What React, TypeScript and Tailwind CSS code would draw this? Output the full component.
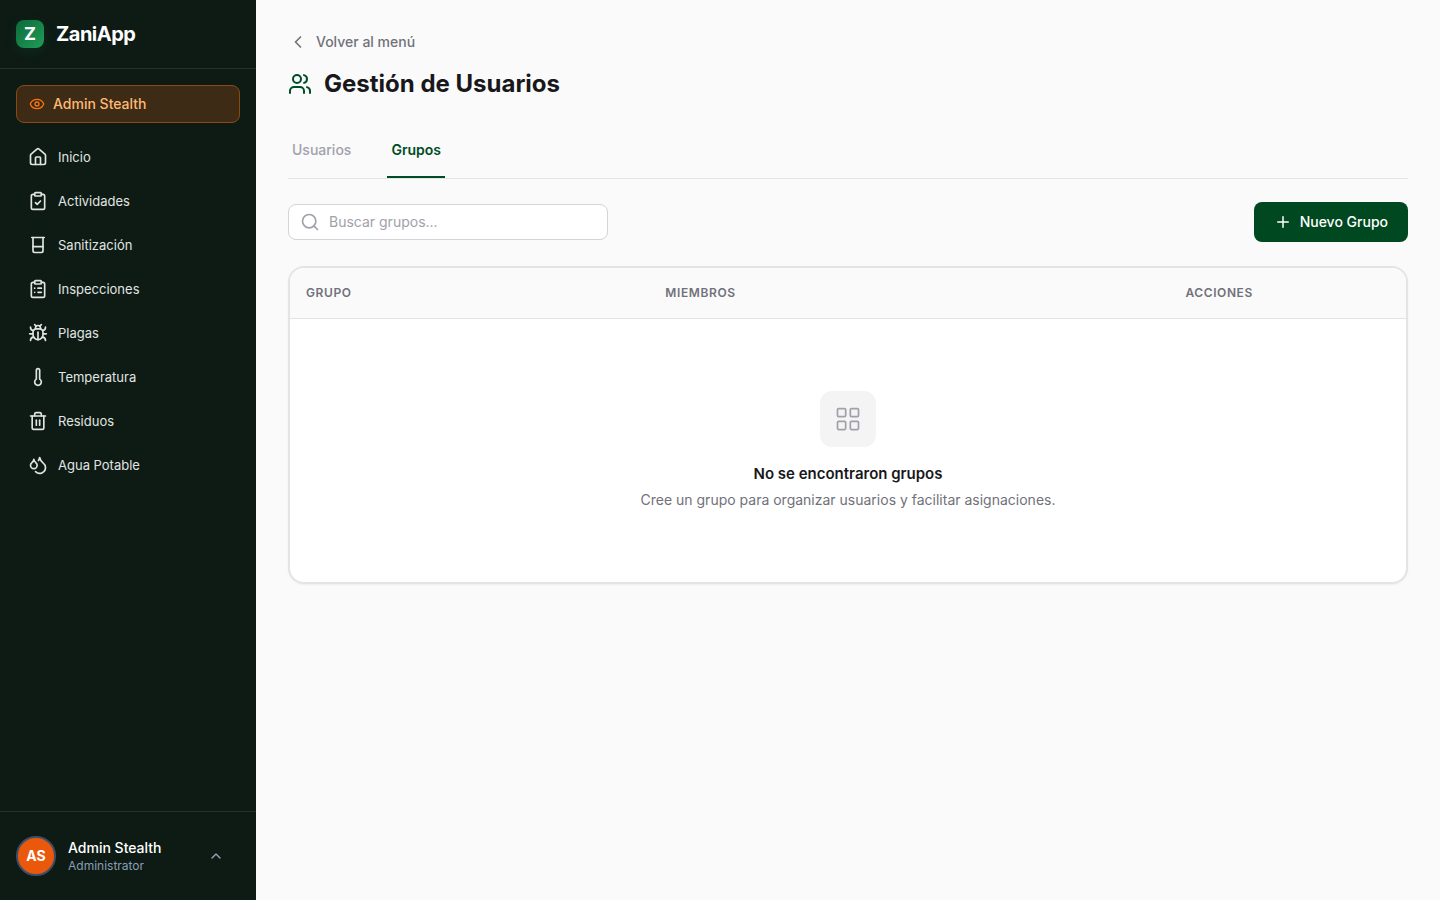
import React from "react";
import {
  Beaker,
  Bug,
  ChevronLeft,
  ChevronUp,
  ClipboardCheck,
  ClipboardList,
  Droplets,
  Eye,
  House,
  LayoutGrid,
  Plus,
  Search,
  Thermometer,
  Trash2,
  Users,
  type LucideIcon,
} from "lucide-react";

const navItems: { label: string; icon: LucideIcon }[] = [
  { label: "Inicio", icon: House },
  { label: "Actividades", icon: ClipboardCheck },
  { label: "Sanitización", icon: Beaker },
  { label: "Inspecciones", icon: ClipboardList },
  { label: "Plagas", icon: Bug },
  { label: "Temperatura", icon: Thermometer },
  { label: "Residuos", icon: Trash2 },
  { label: "Agua Potable", icon: Droplets },
];

function Sidebar() {
  return (
    <aside className="sticky top-0 flex h-screen w-64 shrink-0 flex-col bg-[#0d1b14] text-white">
      <div className="flex items-center gap-3 border-b border-white/10 px-4 py-5">
        <span className="flex size-7 items-center justify-center rounded-lg bg-linear-to-br from-[#0d6b3a] to-[#1f9d57] text-lg font-bold shadow-[0_4px_12px_rgba(22,128,70,0.15)]">
          Z
        </span>
        <span className="text-xl font-bold leading-7 tracking-tight">ZaniApp</span>
      </div>

      <div className="flex flex-1 flex-col gap-3.5 overflow-y-auto p-4">
        <button
          type="button"
          className="flex items-center gap-2 rounded-lg border border-[#8f4716] bg-[#3d2b16] px-3 py-2 text-sm font-medium text-[#fdba74]"
        >
          <Eye className="size-4 text-[#f97316]" />
          Admin Stealth
        </button>
        <nav>
          <ul className="flex flex-col gap-1">
            {navItems.map(({ label, icon: Icon }) => (
              <li key={label}>
                <a href="#" className="flex h-10 items-center gap-2.5 rounded-lg px-3 text-[13px] leading-5 text-[#e0e4e2]">
                  <Icon className="size-5" />
                  {label}
                </a>
              </li>
            ))}
          </ul>
        </nav>
      </div>

      <div className="border-t border-white/10 py-6 pl-4 pr-8">
        <button type="button" className="flex w-full items-center gap-3 text-left">
          <span className="flex size-10 items-center justify-center rounded-full border-2 border-[#3f4f68] bg-[#ea580c] text-sm font-bold">
            AS
          </span>
          <span className="flex flex-1 flex-col">
            <span className="text-sm font-medium leading-5">Admin Stealth</span>
            <span className="text-xs leading-4 text-[#8b9bb8]">Administrator</span>
          </span>
          <ChevronUp className="size-4 text-[#94a3b8]" />
        </button>
      </div>
    </aside>
  );
}

function GroupsTable() {
  return (
    <div className="overflow-hidden rounded-2xl border-2 border-[#e4e4e7] bg-white shadow-xs">
      <table className="w-full table-fixed text-left">
        <thead className="bg-[#fafafa] text-xs font-semibold uppercase tracking-wider text-[#71717a]">
          <tr className="h-[50px] border-b border-[#e4e4e7]">
            <th scope="col" className="w-[32.2%] px-4 font-semibold">Grupo</th>
            <th scope="col" className="px-4 font-semibold">Miembros</th>
            <th scope="col" className="w-[21.2%] px-4 font-semibold">Acciones</th>
          </tr>
        </thead>
        <tbody>
          <tr>
            <td colSpan={3} className="px-6 py-18">
              <div className="flex flex-col items-center">
                <span className="flex size-14 items-center justify-center rounded-xl bg-[#f4f4f5] text-[#a1a1aa]">
                  <LayoutGrid className="size-7" strokeWidth={1.5} />
                </span>
                <h2 className="mt-4 text-[15px] font-semibold leading-[21px] text-[#18181b]">No se encontraron grupos</h2>
                <p className="mt-1.5 text-sm leading-5 text-[#71717a]">
                  Cree un grupo para organizar usuarios y facilitar asignaciones.
                </p>
              </div>
            </td>
          </tr>
        </tbody>
      </table>
    </div>
  );
}

export default function App() {
  return (
    <div className="flex min-h-screen bg-[#fafafa] font-['Inter',sans-serif] text-[#18181b]">
      <Sidebar />
      <main className="min-w-0 flex-1 p-8">
        <a href="#" className="inline-flex h-5 items-center gap-2 text-sm font-medium text-[#71717a]">
          <ChevronLeft className="size-5" />
          Volver al menú
        </a>
        <h1 className="mt-2.5 flex items-center gap-3 text-2xl font-bold leading-8">
          <Users className="size-6 text-[#004d25]" />
          Gestión de Usuarios
        </h1>

        <div role="tablist" className="mt-8 flex gap-8 border-b border-[#e4e4e7]">
          <button type="button" role="tab" aria-selected={false} className="border-b-2 border-transparent px-1 pt-2 pb-4 text-sm font-medium text-[#a1a1aa]">
            Usuarios
          </button>
          <button type="button" role="tab" aria-selected className="border-b-2 border-[#004d25] px-1 pt-2 pb-4 text-sm font-semibold text-[#004d25]">
            Grupos
          </button>
        </div>

        <div className="mt-[23px] mb-6 flex items-center justify-between">
          <label className="flex h-9 w-80 items-center gap-[9px] rounded-lg border border-[#d4d4d8] bg-white px-[11px]">
            <Search className="size-5 text-[#a1a1aa]" aria-label="Buscar" />
            <input
              type="text"
              placeholder="Buscar grupos..."
              className="min-w-0 flex-1 bg-transparent text-sm outline-none placeholder:text-[#a1a1aa]"
            />
          </label>
          <button type="button" className="flex h-10 items-center gap-2 rounded-lg bg-[#004820] px-5 text-sm font-medium text-white">
            <Plus className="size-4.5" />
            Nuevo Grupo
          </button>
        </div>

        <GroupsTable />
      </main>
    </div>
  );
}
